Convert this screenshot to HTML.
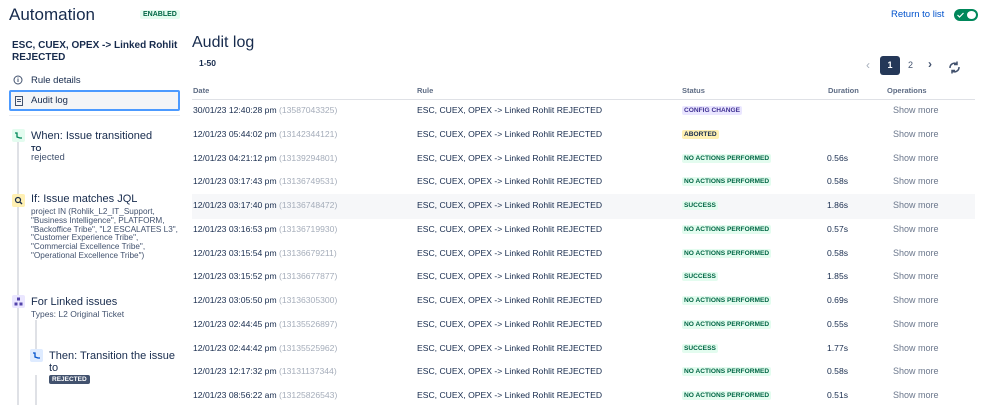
<!DOCTYPE html>
<html><head><meta charset="utf-8">
<style>
*{box-sizing:border-box;margin:0;padding:0}
body{width:998px;height:405px;overflow:hidden;background:#fff;font-family:"Liberation Sans","DejaVu Sans",sans-serif;color:#172b4d;position:relative}
.a{position:absolute;white-space:nowrap}
.lz{font-size:8.6px;color:#172b4d}
.id{color:#a5adba}
.hd{font-size:7.5px;font-weight:bold;color:#5e6c84}
.lz2{font-size:6.6px;font-weight:bold;padding:1px 2px;border-radius:2px}
.g{background:#e3fcef;color:#006644}
.p{background:#eae6ff;color:#403294}
.y{background:#fff0b3;color:#172b4d}
.sm{color:#6b778c;font-size:9px}
</style></head><body>
<div class="a" style="left:9px;top:5px;font-size:17px;color:#172b4d">Automation</div>
<div class="a" style="left:140px;top:10px;font-size:7px;font-weight:bold;background:#e3fcef;color:#006644;padding:1px 3px;border-radius:2px">ENABLED</div>
<div class="a" style="left:12px;top:40px;font-size:10px;font-weight:bold;line-height:12px">ESC, CUEX, OPEX -&gt; Linked Rohlit<br>REJECTED</div>
<svg class="a" style="left:13px;top:75px" width="10" height="10"><circle cx="5" cy="5" r="4" fill="none" stroke="#42526e" stroke-width="1"/><rect x="4.5" y="4" width="1" height="3" fill="#42526e"/><rect x="4.5" y="2.5" width="1" height="1" fill="#42526e"/></svg>
<div class="a" style="left:31px;top:75px;font-size:9.5px;color:#172b4d">Rule details</div>
<div class="a" style="left:9px;top:90px;width:171px;height:21px;border:2px solid #4c9aff;border-radius:2px;background:#f4f5f7"></div>
<svg class="a" style="left:15px;top:96px" width="8" height="10"><rect x="0.5" y="0.5" width="7" height="9" fill="none" stroke="#42526e"/><rect x="2" y="3" width="4" height="1" fill="#42526e"/><rect x="2" y="5" width="4" height="1" fill="#42526e"/></svg>
<div class="a" style="left:31px;top:95px;font-size:9.5px">Audit log</div>
<div class="a" style="left:9px;top:115px;width:171px;height:1px;background:#ebecf0"></div>
<div class="a" style="left:17px;top:140px;width:2px;height:265px;background:#dfe1e6"></div>
<div class="a" style="left:35px;top:375px;width:2px;height:30px;background:#dfe1e6"></div>
<div class="a" style="left:35px;top:320px;width:2px;height:30px;background:#dfe1e6"></div>
<div class="a" style="left:12px;top:129px;width:13px;height:13px;background:#e3fcef;border-radius:2px"></div>
<svg class="a" style="left:14px;top:131px" width="9" height="9"><path d="M1 2H3V6L6 7H8" fill="none" stroke="#00875a" stroke-width="1.3"/></svg>
<div class="a" style="left:31px;top:130px;font-size:11px">When: Issue transitioned</div>
<div class="a" style="left:31px;top:144px;font-size:7.5px;font-weight:bold">TO</div>
<div class="a" style="left:31px;top:152px;font-size:9.5px;color:#42526e">rejected</div>
<div class="a" style="left:12px;top:194px;width:13px;height:13px;background:#fff0b3;border-radius:2px"></div>
<svg class="a" style="left:14px;top:196px" width="9" height="9"><circle cx="4" cy="4" r="2.5" fill="none" stroke="#172b4d" stroke-width="1.2"/><path d="M6 6L8 8" stroke="#172b4d" stroke-width="1.3"/></svg>
<div class="a" style="left:31px;top:193px;font-size:11px">If: Issue matches JQL</div>
<div class="a" style="left:31px;top:208px;font-size:8.2px;line-height:8.8px;color:#42526e">project IN (Rohlik_L2_IT_Support,<br>"Business Intelligence", PLATFORM,<br>"Backoffice Tribe", "L2 ESCALATES L3",<br>"Customer Experience Tribe",<br>"Commercial Excellence Tribe",<br>"Operational Excellence Tribe")</div>
<div class="a" style="left:12px;top:295px;width:13px;height:13px;background:#eae6ff;border-radius:2px"></div>
<svg class="a" style="left:14px;top:297px" width="9" height="9"><rect x="3" y="0.5" width="3" height="3" fill="#5243aa"/><rect x="0.5" y="5.5" width="3" height="3" fill="#5243aa"/><rect x="5.5" y="5.5" width="3" height="3" fill="#5243aa"/></svg>
<div class="a" style="left:31px;top:296px;font-size:11px">For Linked issues</div>
<div class="a" style="left:31px;top:309px;font-size:8.5px;color:#42526e">Types: L2 Original Ticket</div>
<div class="a" style="left:30px;top:349px;width:13px;height:13px;background:#deebff;border-radius:2px"></div>
<svg class="a" style="left:32px;top:351px" width="9" height="9"><path d="M1 2H3V6L6 7H8" fill="none" stroke="#0052cc" stroke-width="1.3"/></svg>
<div class="a" style="left:49px;top:350px;font-size:11px;line-height:12px">Then: Transition the issue<br>to</div>
<div class="a" style="left:49px;top:375px;font-size:6.5px;font-weight:bold;background:#42526e;color:#fff;padding:1px 3px;border-radius:2px">REJECTED</div>

<div class="a" style="left:192px;top:34px;font-size:16px">Audit log</div>
<div class="a" style="left:199px;top:58px;font-size:8.5px;font-weight:bold">1-50</div>
<div class="a" style="left:866px;top:58px;color:#a5adba;font-size:12px">‹</div>
<div class="a" style="left:880px;top:56px;width:20px;height:19px;background:#253858;border-radius:3px;color:#fff;font-size:9px;font-weight:bold;text-align:center;line-height:19px">1</div>
<div class="a" style="left:908px;top:60px;font-size:9px;color:#42526e">2</div>
<div class="a" style="left:928px;top:57px;font-size:12px;color:#42526e;font-weight:bold">›</div>
<svg class="a" style="left:948px;top:61px" width="13" height="13"><path d="M2 7A4.5 4.5 0 0 1 9 3M9 0.5V3.5H6M11 6A4.5 4.5 0 0 1 4 10M4 12.5V9.5H7" fill="none" stroke="#42526e" stroke-width="1.5"/></svg>
<div class="a" style="left:891px;top:9px;font-size:9.5px;color:#0052cc">Return to list</div>
<div class="a" style="left:954px;top:9px;width:24px;height:12px;border-radius:6px;background:#00875a"></div>
<div class="a" style="left:967px;top:11px;width:9px;height:8px;border-radius:50%;background:#fff"></div>
<svg class="a" style="left:957px;top:12px" width="7" height="6"><path d="M0.5 3L2.5 5L6.5 1" fill="none" stroke="#fff" stroke-width="1.2"/></svg>

<div class="a hd" style="left:193px;top:86px">Date</div>
<div class="a hd" style="left:417px;top:86px">Rule</div>
<div class="a hd" style="left:682px;top:86px">Status</div>
<div class="a hd" style="left:828px;top:86px">Duration</div>
<div class="a hd" style="left:887px;top:86px">Operations</div>
<div class="a" style="left:192px;top:99px;width:783px;height:1px;background:#dfe1e6"></div>
<div class="a" style="left:192px;top:194px;width:783px;height:25px;background:#f6f7f9"></div>
<div id="rows"></div>
<script>
var d=[["30/01/23 12:40:28 pm","13587043325","p","CONFIG CHANGE",""],
["12/01/23 05:44:02 pm","13142344121","y","ABORTED",""],
["12/01/23 04:21:12 pm","13139294801","g","NO ACTIONS PERFORMED","0.56s"],
["12/01/23 03:17:43 pm","13136749531","g","NO ACTIONS PERFORMED","0.58s"],
["12/01/23 03:17:40 pm","13136748472","g","SUCCESS","1.86s"],
["12/01/23 03:16:53 pm","13136719930","g","NO ACTIONS PERFORMED","0.57s"],
["12/01/23 03:15:54 pm","13136679211","g","NO ACTIONS PERFORMED","0.58s"],
["12/01/23 03:15:52 pm","13136677877","g","SUCCESS","1.85s"],
["12/01/23 03:05:50 pm","13136305300","g","NO ACTIONS PERFORMED","0.69s"],
["12/01/23 02:44:45 pm","13135526897","g","NO ACTIONS PERFORMED","0.55s"],
["12/01/23 02:44:42 pm","13135525962","g","SUCCESS","1.77s"],
["12/01/23 12:17:32 pm","13131137344","g","NO ACTIONS PERFORMED","0.58s"],
["12/01/23 08:56:22 am","13125826543","g","NO ACTIONS PERFORMED","0.51s"]];
var h="";
d.forEach(function(r,i){var y=105+i*23.75;
h+='<div class="a lz" style="left:193px;top:'+y+'px">'+r[0]+' <span class="id">('+r[1]+')</span></div>';
h+='<div class="a lz" style="left:417px;top:'+y+'px">ESC, CUEX, OPEX -&gt; Linked Rohlit REJECTED</div>';
h+='<div class="a lz2 '+r[2]+'" style="left:682px;top:'+(y+1)+'px">'+r[3]+'</div>';
h+='<div class="a lz" style="left:827px;top:'+y+'px">'+r[4]+'</div>';
h+='<div class="a sm" style="left:893px;top:'+y+'px">Show more</div>';});
document.getElementById("rows").innerHTML=h;
</script>
</body></html>
